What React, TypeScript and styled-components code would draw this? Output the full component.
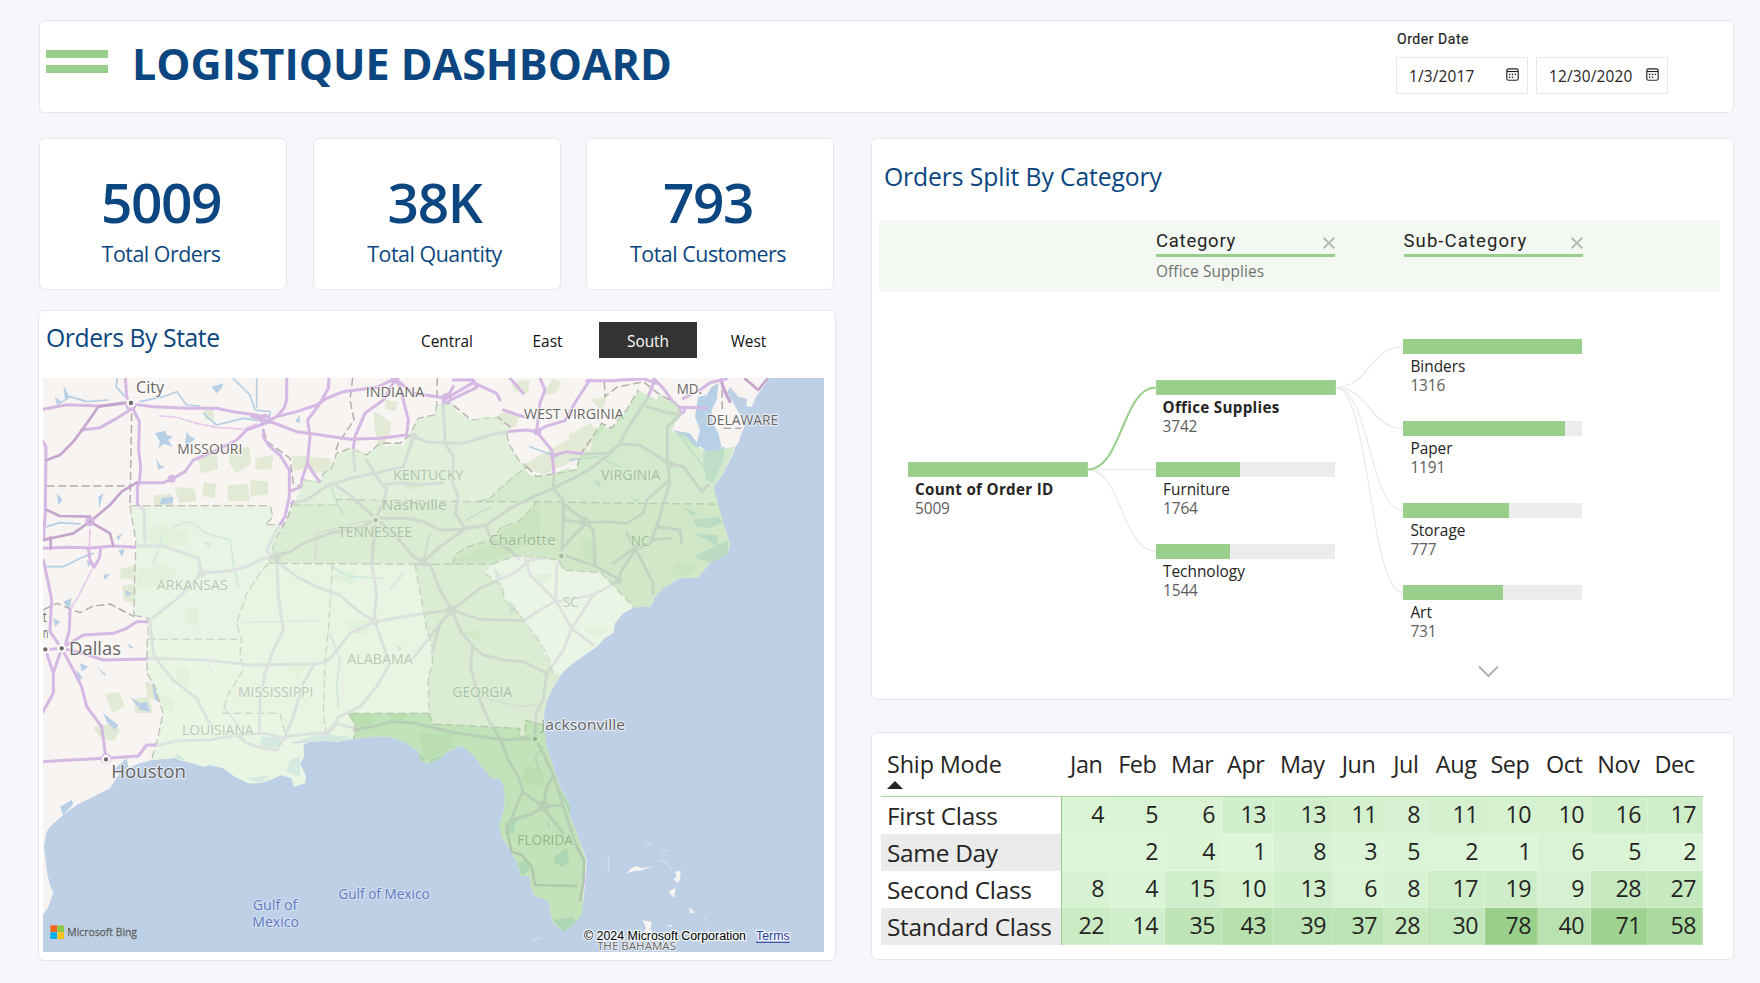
import React from "react";
import styled, { createGlobalStyle } from "styled-components";

const UI = `"Open Sans", "Noto Sans", sans-serif`;
const DIN = `Roboto, "Liberation Sans", sans-serif`;
const NAVY = "#0b4680";
const GREEN = "#98d08b";

const GlobalStyle = createGlobalStyle`
  html, body { margin: 0; padding: 0; background: #f6f7fc; }
  body { width: 1760px; height: 983px; overflow: hidden; font-family: ${UI}; color: #252423; }
  *, *::before, *::after { box-sizing: border-box; }
`;

/* ---------- page frame ---------- */

const Page = styled.div`
  width: 1760px;
  height: 983px;
  padding: 20px 26px 0 39px;
  display: flex;
  flex-direction: column;
  gap: 25px;
`;

const Card = styled.section`
  background: #fff;
  border: 1px solid #e6e7e8;
  border-radius: 6px;
`;

const HeaderCard = styled(Card)`
  height: 93px;
  display: flex;
  justify-content: space-between;
  padding: 0 65px 0 6px;
`;

const Brand = styled.div`
  display: flex;
  gap: 24px;
`;

const Bars = styled.div`
  width: 62px;
  padding-top: 29px;
  display: flex;
  flex-direction: column;
  gap: 7px;
`;

const Bar = styled.span`
  height: 8px;
  background: ${GREEN};
`;

const Title = styled.h1`
  margin: 13px 0 0;
  font-size: 43px;
  font-weight: 700;
  line-height: 60px;
  color: ${NAVY};
  white-space: nowrap;
`;

const DateFilter = styled.div`
  width: 272px;
  padding-top: 10px;
`;

const DateLabel = styled.div`
  font-family: ${DIN};
  font-size: 14px;
  font-weight: 400;
  line-height: 17px;
  letter-spacing: 0.55px;
  padding-left: 1px;
  -webkit-text-stroke: 0.2px #252423;
`;

const DateRow = styled.div`
  display: flex;
  gap: 8px;
  margin-top: 9px;
`;

const DateBox = styled.div`
  width: 132px;
  height: 37px;
  border: 1px solid #e8e8e8;
  display: flex;
  justify-content: space-between;
  padding: 0 8px 0 12px;
  font-size: 15.4px;
  letter-spacing: 0.18px;
  line-height: 38px;
  white-space: nowrap;
  svg { margin-top: 9.5px; flex: none; }
`;

const Columns = styled.main`
  display: flex;
  gap: 36px;
`;

const LeftColumn = styled.div`
  width: 796px;
  display: flex;
  flex-direction: column;
  gap: 20px;
`;

const RightColumn = styled.div`
  width: 863px;
  display: flex;
  flex-direction: column;
  gap: 32px;
`;

/* ---------- key figures ---------- */

const Stats = styled.div`
  width: 795px;
  display: grid;
  grid-template-columns: repeat(3, 248px);
  justify-content: space-between;
`;

const StatCard = styled(Card)`
  height: 152px;
  padding: 27px 4px 0 0;
  text-align: center;
  color: ${NAVY};
`;

const StatValue = styled.div`
  font-size: 55px;
  font-weight: 600;
  line-height: 71px;
  letter-spacing: -1.4px;
`;

const StatLabel = styled.div`
  margin-top: 2px;
  font-size: 21.4px;
  line-height: 30px;
  letter-spacing: -0.48px;
`;

/* ---------- map panel ---------- */

const MapCard = styled(Card)`
  height: 651px;
  margin: 0 -1px;
  padding: 11px 11px 0 4px;
`;

const MapHeader = styled.div`
  display: flex;
  justify-content: space-between;
  height: 56px;
  padding: 0 27px 0 3px;
`;

const PanelTitle = styled.h2`
  margin: 0;
  font-size: 24.7px;
  font-weight: 400;
  line-height: 32px;
  letter-spacing: -0.42px;
  color: ${NAVY};
  white-space: nowrap;
`;

const Tabs = styled.div`
  display: flex;
  gap: 2.5px;
`;

const Tab = styled.button<{ $active?: boolean }>`
  width: 98px;
  height: 36px;
  padding: 3px 0 0 1px;
  border: 0;
  font: 400 15.4px/33px ${UI};
  letter-spacing: 0;
  background: ${(p) => (p.$active ? "#333" : "transparent")};
  color: ${(p) => (p.$active ? "#fff" : "#111")};
`;

const MapSvg = styled.svg`
  display: block;
  font-family: ${UI};
`;

/* ---------- decomposition tree ---------- */

const TreeCard = styled(Card)`
  height: 562px;
  padding: 21px 13px 0 7px;
`;

const TreeTitle = styled(PanelTitle)`
  padding-left: 5px;
  height: 60px;
  line-height: 34px;
  letter-spacing: -0.1px;
`;

const LevelBand = styled.div`
  height: 72px;
  background: #f3f8f2;
  display: flex;
  gap: 68.5px;
  padding: 12px 0 0 277px;
`;

const Level = styled.div`
  width: 179px;
`;

const LevelHead = styled.div<{ $wide?: boolean }>`
  height: 25px;
  border-bottom: 3px solid ${GREEN};
  display: flex;
  justify-content: space-between;
  font-family: ${DIN};
  font-size: 18.5px;
  line-height: 19px;
  letter-spacing: ${(p) => (p.$wide ? "1.1px" : "0.75px")};
  white-space: nowrap;
  svg { margin-top: 4.5px; }
`;

const LevelValue = styled.div`
  font-size: 15.4px;
  line-height: 30px;
  letter-spacing: 0.1px;
  color: #70726f;
`;

const TreeCanvas = styled.div`
  position: relative;
  height: 400px;
`;

const Links = styled.svg`
  position: absolute;
  left: 0;
  top: 0;
`;

const NodeBox = styled.div<{ $bold?: boolean }>`
  position: absolute;
  width: ${(p) => (p.$bold ? "180px" : "179px")};
`;

const Track = styled.div<{ $full?: boolean }>`
  height: 14.5px;
  background: #ececec;
  outline: ${(p) => (p.$full ? "1px solid #a9cfa0" : "none")};
  outline-offset: -1px;
`;

const Fill = styled.div`
  height: 100%;
  background: ${GREEN};
`;

const NodeName = styled.div<{ $bold?: boolean }>`
  padding: 3.5px 0 0 7px;
  font-size: ${(p) => (p.$bold ? "15.2px" : "15.4px")};
  font-weight: ${(p) => (p.$bold ? 700 : 400)};
  line-height: 19px;
  letter-spacing: ${(p) => (p.$bold ? "0.3px" : "0")};
  white-space: nowrap;
`;

const NodeValue = styled.div`
  padding-left: 7px;
  font-size: 15.4px;
  line-height: 19px;
  letter-spacing: -0.1px;
  color: #605e5c;
`;

const More = styled.svg`
  position: absolute;
  left: 599px;
  top: 373px;
`;

/* ---------- matrix ---------- */

const TableCard = styled(Card)`
  height: 228px;
  padding: 13px 0 0 9px;
`;

const Matrix = styled.table`
  width: 822px;
  table-layout: fixed;
  border-collapse: separate;
  border-spacing: 0;
`;

const MonthHead = styled.th`
  height: 51px;
  padding: 3px 8.5px 0 0;
  font-size: 23.4px;
  font-weight: 400;
  line-height: 30px;
  letter-spacing: -0.4px;
  text-align: right;
  vertical-align: top;
  white-space: nowrap;
  border-bottom: 1.5px solid #a5d59b;
`;

const ModeHead = styled(MonthHead)`
  text-align: left;
  padding: 3px 0 0 6px;
  letter-spacing: -0.15px;
`;

const SortMark = styled.span`
  display: block;
  width: 0;
  margin-top: 2px;
  border: 8px solid transparent;
  border-top: 0;
  border-bottom: 8px solid #252423;
`;

const ModeCell = styled.th<{ $shade: boolean }>`
  height: 37px;
  padding: 1px 0 0 6px;
  font-size: 24.4px;
  font-weight: 400;
  line-height: 36px;
  letter-spacing: -0.28px;
  text-align: left;
  white-space: nowrap;
  background: ${(p) => (p.$shade ? "#ebebeb" : "#fff")};
  border-right: 1.5px solid #98c98d;
`;

const HeatCell = styled.td<{ $tone: string }>`
  height: 37px;
  padding: 0 7px 3px 0;
  font-size: 23.2px;
  line-height: 34px;
  letter-spacing: -0.5px;
  text-align: right;
  background: ${(p) => p.$tone};
  box-shadow: inset -1px -1px 0 rgba(255, 255, 255, 0.22);
`;

/* ---------- data ---------- */

const months = ["Jan", "Feb", "Mar", "Apr", "May", "Jun", "Jul", "Aug", "Sep", "Oct", "Nov", "Dec"];
const monthWidths = [49, 54, 57, 51, 60, 51, 43, 58, 53, 53, 57, 55];
const shipModes: { name: string; values: (number | null)[] }[] = [
  { name: "First Class", values: [4, 5, 6, 13, 13, 11, 8, 11, 10, 10, 16, 17] },
  { name: "Same Day", values: [null, 2, 4, 1, 8, 3, 5, 2, 1, 6, 5, 2] },
  { name: "Second Class", values: [8, 4, 15, 10, 13, 6, 8, 17, 19, 9, 28, 27] },
  { name: "Standard Class", values: [22, 14, 35, 43, 39, 37, 28, 30, 78, 40, 71, 58] },
];

const heat = (v: number | null) => {
  const t = ((v ?? 1) - 1) / 77;
  const mix = (a: number, b: number) => Math.round(a + (b - a) * t);
  return `rgb(${mix(221, 152)}, ${mix(245, 208)}, ${mix(217, 139)})`;
};

type TreeNode = { x: number; y: number; name: string; value: string; share: number; bold?: boolean };
const nodes: TreeNode[] = [
  { x: 29, y: 170, name: "Count of Order ID", value: "5009", share: 1, bold: true },
  { x: 276.5, y: 88, name: "Office Supplies", value: "3742", share: 1, bold: true },
  { x: 277, y: 170, name: "Furniture", value: "1764", share: 0.471 },
  { x: 277, y: 252, name: "Technology", value: "1544", share: 0.413 },
  { x: 524.4, y: 47, name: "Binders", value: "1316", share: 1 },
  { x: 524.4, y: 129, name: "Paper", value: "1191", share: 0.905 },
  { x: 524.4, y: 211, name: "Storage", value: "777", share: 0.59 },
  { x: 524.4, y: 293, name: "Art", value: "731", share: 0.555 },
];

const curve = (x1: number, y1: number, x2: number, y2: number) => {
  const m = (x1 + x2) / 2;
  return `M${x1} ${y1}C${m} ${y1} ${m} ${y2} ${x2} ${y2}`;
};

/* Map geometry: three drawing units to one screen pixel. */

const land =
  "M39 234H2218L2200 262 2178 290 2165 322 2148 318 2152 296 2125 290 2100 262 2092 275 2105 300 2130 345 2145 375 2135 400 2125 430 2115 440 2110 460 2080 520 2050 560 2065 620 2080 670 2100 730 2093 763 2040 790 2003 833 1950 835 1900 865 1875 890 1863 920 1812 922 1780 940 1755 970 1750 998 1720 1018 1700 1040 1635 1085 1605 1110 1592 1125 1565 1170 1550 1205 1542 1240 1543 1290 1550 1340 1570 1400 1590 1460 1620 1515 1620 1550 1645 1610 1670 1680 1665 1750 1658 1820 1655 1845 1630 1875 1600 1895 1570 1870 1562 1840 1558 1810 1540 1795 1515 1788 1502 1760 1498 1728 1472 1728 1462 1690 1440 1650 1415 1610 1407 1575 1422 1530 1425 1490 1420 1455 1410 1438 1385 1435 1355 1400 1330 1365 1295 1337 1260 1350 1230 1375 1200 1393 1170 1382 1165 1355 1130 1330 1080 1310 1030 1310 970 1318 920 1325 850 1323 820 1335 822 1370 810 1390 828 1430 825 1450 792 1460 785 1435 755 1425 720 1440 690 1450 655 1450 615 1430 580 1405 540 1395 520 1400 470 1385 430 1375 365 1380 330 1390 290 1405 262 1430 240 1465 190 1490 140 1515 100 1545 60 1580 48 1600 42 1640 50 1710 58 1750 70 1780 55 1820 39 1845Z";

const states: { id: string; fill: string; d: string }[] = [
  { id: "KY", fill: "#d4edcf", d: "M790 615L795 600 812 570 820 540 850 540 870 548 880 520 905 505 920 460 940 455 960 445 985 450 1010 465 1050 430 1070 440 1110 430 1115 440 1140 405 1165 355 1190 350 1215 345 1220 315 1245 310 1265 312 1280 335 1325 360 1360 350 1405 352 1415 375 1445 385 1430 400 1435 430 1465 480 1490 500 1480 505 1415 560 1380 595 1340 605 920 598 920 615Z" },
  { id: "TN", fill: "#cbe8c3", d: "M790 615L775 650 760 680 735 720 725 760 715 790 1155 793 1268 793 1275 765 1310 742 1385 720 1415 680 1465 665 1500 630 1520 605 1340 605 920 598 920 615Z" },
  { id: "VA", fill: "#c3e4ba", d: "M1340 605L1380 595 1415 560 1480 505 1500 525 1520 530 1570 522 1610 505 1640 510 1650 465 1680 450 1695 400 1715 370 1730 385 1745 385 1790 330 1825 270 1880 300 1890 280 1910 300 1940 310 1955 345 1935 370 1925 395 1960 400 2000 440 2030 455 2115 440 2080 520 2050 560 2065 612 1820 610 1520 605Z" },
  { id: "NC", fill: "#bce1b2", d: "M1520 605L1820 610 2065 612 2080 670 2100 730 2093 763 2040 790 2003 833 1950 835 1900 865 1875 890 1863 920 1812 922 1712 818 1600 810 1585 780 1545 775 1458 768 1385 793 1268 793 1275 765 1310 742 1385 720 1415 680 1465 665 1500 630Z" },
  { id: "SC", fill: "#e3f5df", d: "M1385 793L1458 768 1545 775 1585 780 1600 810 1712 818 1812 922 1780 940 1755 970 1750 998 1720 1018 1700 1040 1635 1085 1605 1110 1592 1122 1568 1118 1560 1085 1540 1060 1530 1025 1500 990 1470 945 1425 900 1415 855 1365 820Z" },
  { id: "GA", fill: "#cce9c4", d: "M1155 793H1385L1365 820 1415 855 1425 900 1470 945 1500 990 1530 1025 1540 1060 1560 1085 1568 1118 1592 1125 1565 1170 1550 1205 1542 1240 1541 1275 1485 1260 1485 1308 1470 1312 1470 1285 1210 1272 1197 1240 1195 1130 1205 1100 1210 1050 1190 990 1180 930 1165 850Z" },
  { id: "AL", fill: "#dff5da", d: "M908 793H1155L1165 850 1180 930 1190 990 1210 1050 1205 1100 1195 1130 1197 1240H955L975 1275 970 1318 920 1325 887 1324V1295L880 1240 885 1090 895 990Z" },
  { id: "MS", fill: "#e0f5dc", d: "M715 790L908 793 895 990 885 1090 880 1240 887 1295V1324L820 1328 775 1325 765 1300 750 1240H580L590 1190 640 1110 630 1060 635 1018 620 970 650 880 690 820Z" },
  { id: "LA", fill: "#e2f6dd", d: "M352 1018H635L630 1060 640 1110 590 1190 580 1240H750L765 1300 775 1325 820 1335 822 1370 810 1390 828 1430 825 1450 792 1460 785 1435 755 1425 720 1440 690 1450 655 1450 615 1430 580 1405 540 1395 520 1400 470 1385 430 1375 365 1380 385 1310 400 1240 375 1160 352 1120Z" },
  { id: "AR", fill: "#e0f5dd", d: "M300 618H720L728 650 705 675H760L735 720 725 760 715 790 690 820 650 880 620 970 635 1018H352L355 955 312 945 318 720Z" },
  { id: "FL", fill: "#a8d89e", d: "M955 1240H1197L1210 1272 1470 1285V1312L1485 1308V1260L1541 1275 1543 1290 1550 1340 1570 1400 1590 1460 1620 1515 1620 1550 1645 1610 1668 1680 1662 1750 1658 1820 1655 1845 1630 1875 1600 1895 1570 1870 1562 1840 1558 1810 1540 1795 1515 1788 1502 1760 1498 1728 1472 1728 1462 1690 1440 1650 1415 1610 1407 1575 1422 1530 1425 1490 1420 1455 1410 1438 1385 1435 1355 1400 1330 1365 1295 1337 1260 1350 1230 1375 1200 1393 1170 1382 1165 1355 1130 1330 1080 1310 1030 1310 970 1318 975 1275Z" },
];

const highways = [
  "M39 328L110 314 210 318 290 310 370 320 470 325 560 325 610 335 680 345 705 352",
  "M155 390L210 383 260 355 300 330",
  "M286 234L290 290 303 315 328 365 326 450 332 500 328 550 322 560V615L342 630 345 735",
  "M39 425L48 440 46 640 40 720",
  "M39 720L62 715M39 745L120 742 180 744 250 738 320 742",
  "M320 548L400 548 430 535 465 515 490 480 520 468 560 450 620 420 650 390 700 372",
  "M175 745L180 780 192 802 208 775 212 745",
  "M320 738L400 738 450 755 505 775 515 820 600 812 650 800 700 775 740 770",
  "M515 820L450 890 360 960 370 1060 380 1080",
  "M770 234V300L762 325 740 350 705 368",
  "M897 234L895 265 870 310 833 360 840 410 832 490 815 540 815 560 785 572",
  "M740 350L800 335 860 315 890 295 940 275 1040 262 1095 236",
  "M665 350L705 360 740 372 800 395 850 402 960 418 1050 415 1130 405 1135 360 1110 260 1095 236",
  "M700 390V410L715 435 750 465 778 510V590L765 650 740 690 710 750 725 770",
  "M832 490L850 520 870 546",
  "M970 445L975 410 1005 340 1060 300 1095 240",
  "M1100 240L1150 280 1250 295 1270 260",
  "M725 770L780 755 830 725 900 700 1000 680 1037 655 1130 655 1180 665 1230 690 1300 688 1370 675 1440 625 1500 595 1570 565 1640 530 1690 500 1740 460 1770 430 1795 380 1850 300 1875 240",
  "M785 610L830 600 890 558 960 535 1035 520 1120 500 1150 410 1190 425 1245 430 1300 430 1380 405 1430 395 1490 390 1520 395 1545 380 1605 362 1640 300 1680 240",
  "M970 455L975 510M1010 480L1040 530 1070 570 1060 610 1037 655",
  "M915 555L960 585 1037 655 1100 710 1150 770 1180 785 1230 740 1300 690",
  "M1037 655L1025 790 1040 880 1030 970",
  "M1060 555L1110 548 1160 555 1200 552 1240 548",
  "M740 770L745 890 760 990 730 1050 705 1120 690 1200 688 1300",
  "M740 785L800 830 860 860 930 885 980 930 1035 965M1035 965L1150 945 1265 930",
  "M1270 240L1330 240 1340 262 1262 300M1240 300L1330 248 1400 280 1410 300",
  "M1240 310L1245 430 1270 470 1268 550 1285 590 1275 640 1305 685 1365 675 1385 720 1440 750 1465 775",
  "M1420 330L1480 350M1440 234L1480 280",
  "M1520 395L1565 450 1572 520 1570 565 1600 600V660L1595 765 1580 800 1578 900",
  "M1530 234L1545 270 1530 310 1520 395",
  "M1565 468L1610 455 1660 462 1735 460 1770 432",
  "M1670 242H1740L1840 236 1880 250",
  "M1770 432L1830 435 1915 490 1960 500 1990 540 2015 575 2035 555",
  "M1850 320L1900 335 1950 345M1870 234L1900 265 1925 300 1950 325 1945 350 1912 380V490L1920 545 1880 680 1860 730 1818 745 1770 820V845",
  "M1918 540L1850 600 1840 640 1790 670 1730 665 1660 668 1600 660",
  "M1600 610L1670 668 1600 740M1670 668L1650 650M1665 665L1690 690 1695 790",
  "M1485 775L1500 825 1580 905 1690 885 1770 840 1700 800 1600 765",
  "M1265 930L1350 865 1450 820 1500 780 1545 775",
  "M1265 930L1350 958 1480 962 1530 930 1578 903 1625 985 1645 955 1690 885",
  "M1155 793L1200 793 1230 870 1265 930 1200 1010 1150 1075",
  "M1265 930L1295 1000 1328 1035 1322 1100 1345 1190 1375 1260 1410 1315 1435 1380 1465 1430 1478 1475 1450 1540 1430 1590",
  "M1328 1040L1360 1065 1420 1080 1480 1085 1550 1120M1265 930L1230 970 1205 1060",
  "M1950 322L2030 324M1960 295L2010 270 2040 248 2090 236M2075 236L2080 270 2100 305",
  "M1790 700L1810 735 1870 850 1868 880M1818 740L1750 790",
  "M1880 680L1950 690 1955 730M1865 720L1920 715",
  "M1625 985L1690 1035M1625 985L1600 1050 1580 1080 1550 1120 1540 1200 1518 1240 1515 1315 1540 1360 1572 1430 1600 1520 1640 1640",
  "M1200 1280L1260 1295 1420 1320 1515 1315M970 1290L1020 1282 1080 1265 1150 1268 1240 1292",
  "M385 1335L440 1322 540 1320 620 1305 650 1330 700 1345 740 1350 765 1310 850 1300 890 1300 915 1270 975 1285",
  "M620 1305L700 1300 765 1315",
  "M1035 965L1050 1010 1080 1090 1040 1160 990 1220 920 1255 915 1280 890 1300",
  "M1035 965L960 1000 900 1075 885 1085 850 1095 820 1150 790 1250 762 1315",
  "M355 1075L530 1080 660 1095 850 1092",
  "M380 1080L430 1140 500 1195 520 1235 545 1280",
  "M95 1045L70 1120V1180L39 1235M46 1048L70 1120M39 1050L95 1045 60 995",
  "M95 1045L130 1110 155 1160 170 1220 215 1280 228 1375",
  "M95 1045L160 1060 220 1080 352 1077M95 1045L160 1005 250 1000 290 985 320 965H352",
  "M60 990L65 900 55 850 40 780M105 1040L118 990 120 930",
  "M39 1385L120 1380 228 1375 325 1368 350 1335H385",
  "M1440 1560L1500 1545 1540 1520 1550 1460 1570 1430M1478 1475L1540 1520 1595 1515",
  "M1545 1530L1600 1600",
];

const tollways = [
  "M50 480L90 465 130 425 160 385 205 320 285 308",
  "M39 720L130 700 180 665 240 615 275 575 320 548",
  "M50 630L90 648 180 650M180 665L240 700 250 738",
  "M62 712V745",
  "M2145 236L2185 270 2212 236M2075 250L2100 305",
  "M1430 1590L1445 1655 1475 1665 1505 1700 1515 1755 1640 1758M1640 1640L1662 1680 1660 1750 1650 1800",
];

const thinRoads = [
  "M390 348L440 352 500 370 560 382 640 388 680 372",
  "M120 930L150 880 185 810M180 690L178 740",
  "M640 968L750 965 860 962M1040 655L860 700 855 780",
  "M1345 1190L1460 1218 1530 1215M530 1080L545 1110",
];

const borders = [
  "M305 340L300 618H720L728 650 705 675H760",
  "M50 558H300M312 945L355 955V1018H635M300 618L318 720 312 945",
  "M39 930L80 910 150 938 190 918 240 912 312 950",
  "M790 615H920V598L1340 605 1520 605 1820 610 2065 612",
  "M715 790L1155 793 1385 793M908 793L895 990 885 1090 880 1240 887 1295",
  "M1155 793L1165 850 1180 930 1190 990 1210 1050 1205 1100 1195 1130 1197 1240H955L975 1275 970 1318",
  "M1197 1240L1210 1272 1470 1285V1312L1485 1308V1260L1541 1275",
  "M715 790L690 820 650 880 620 970 635 1018 630 1060 640 1110 590 1190 580 1240H750L765 1300",
  "M352 1120L375 1160 400 1240 385 1310 365 1380M352 1018V1120",
  "M968 234L960 300 972 360 925 430 915 460M1222 234L1220 310",
  "M820 540L870 548 880 520 905 505 920 460 960 445 1010 465 1050 430 1110 430 1140 405 1165 355 1215 345 1220 315 1265 312 1325 360 1405 352 1445 385",
  "M1430 400L1435 430 1465 480 1490 500 1415 560 1380 595 1340 605M1490 500L1520 530 1570 522 1640 510 1650 465 1695 400 1715 370 1745 385 1790 330 1825 270",
  "M1723 245L1725 290 1760 262 1840 245 1890 285 1940 310M2075 234L2077 330M2080 385H2135",
  "M1268 793L1275 765 1310 742 1385 720 1415 680 1465 665 1500 630 1520 605",
  "M1385 793L1458 768 1585 780 1600 810 1712 818 1812 922M1365 820L1415 855 1425 900 1470 945 1530 1025 1560 1085 1568 1118",
  "M700 390L712 425 780 475 790 550 812 560M790 600L775 650 735 720 715 790",
];

const rivers = [
  "M262 234L258 260 285 290M330 305L400 290 440 275 470 315 510 318",
  "M610 236L660 285 675 330 720 335 718 370M680 234V320",
  "M520 340L560 375 640 355 690 362M75 320L120 290 170 305 235 300",
  "M400 700L370 790M430 680L480 665 530 700 600 720 610 790 625 860",
  "M48 800L100 800 150 775 190 760M50 680L90 668 150 672",
  "M900 550L925 620 940 640M905 800L960 830 1060 835M1120 820L1080 870",
  "M1540 1340L1515 1370 1530 1420M900 1000L930 1080 920 1150 925 1220",
  "M580 1220L620 1270 640 1320M1200 700L1180 780M1620 480L1700 470 1770 500",
  "M1945 400L1990 460 2020 500M1500 440L1580 470M1380 620L1310 660",
];

const forests = [
  "M510 470L555 460 560 505 515 515ZM605 450L655 445 660 490 620 515 600 485ZM680 480L725 470 722 505 680 505Z",
  "M440 565L490 570 495 600 450 605ZM525 550L555 555 550 590 520 585ZM595 560L650 555 655 600 600 600ZM665 545L710 548V580L665 585Z",
  "M790 470L850 475 900 480 895 510 860 515 830 500 795 510ZM1035 340L1080 370 1075 400 1050 445 1040 400ZM1070 305L1100 310 1095 328 1070 325Z",
  "M525 335L545 330 548 355 528 355ZM375 590L420 585 425 612 378 612ZM275 810L312 800V835L275 832ZM280 860L312 855V905L285 900Z",
  "M1410 345L1445 335 1465 350 1455 378 1415 370ZM1450 250L1495 245 1490 275 1455 270ZM1545 280L1570 240 1590 250 1575 275ZM1620 405L1680 375 1700 395 1670 430 1625 440ZM1690 300L1725 295 1715 330Z",
  "M230 1185L265 1180 280 1215 250 1235ZM315 1200L355 1195 365 1235 320 1235ZM195 1285L240 1275 265 1290 250 1320 215 1310ZM350 1150L375 1160 395 1200 355 1190Z",
  "M340 690L400 680 470 700 465 735 400 730 340 715ZM325 810L400 795 440 820 400 850 325 865ZM470 930L500 925V975L470 965Z",
  "M440 1110L475 1105V1150L445 1150ZM770 1090L830 1095 800 1125ZM400 1190L430 1200 425 1230 405 1225ZM950 970L1020 965 1000 1005ZM900 830L970 815 965 850Z",
  "M1110 520L1160 510 1180 560 1130 565ZM1280 780L1380 740 1420 700 1480 660 1520 620 1530 700 1450 750 1380 780ZM1480 500L1600 430 1720 380 1650 470 1540 520Z",
  "M960 1245H1030L1020 1275 970 1270ZM1080 1245H1130L1110 1262ZM1170 1300L1250 1310 1270 1345 1190 1375ZM1490 1400L1540 1420 1530 1460 1480 1440ZM1300 1000L1340 990 1350 1020Z",
  "M1240 1290L1280 1300 1260 1335ZM1660 720L1700 730 1695 780 1665 770ZM1940 795L2000 790 1980 820 1930 820ZM1500 830L1560 825 1540 850ZM1670 990L1730 990 1700 1010Z",
];

const lakes = [
  "M375 400L405 392 410 405 430 410 415 420 428 440 402 432 385 445 390 425ZM470 395L482 410 495 415 480 430 465 432Z",
  "M378 475L390 495 405 500 385 510ZM395 595L430 590 428 610 390 612ZM795 365L808 345 810 368Z",
  "M545 260L580 250 575 265 560 280ZM100 255L118 290 105 300ZM75 290L95 305 80 312Z",
  "M300 1190L330 1210 350 1205 360 1235 330 1230ZM220 1240L245 1260 265 1275 255 1290 230 1265ZM365 1150L395 1210 375 1200Z",
  "M150 1090L175 1100 155 1115ZM200 1100L225 1120 228 1130ZM140 1110L158 1135 140 1145ZM295 1030L312 1045 298 1045Z",
  "M80 580L98 600 85 615ZM205 590L220 580 208 625ZM260 710L278 700 265 722ZM70 955L92 965 75 980ZM100 905L125 895 118 930Z",
  "M220 825L240 822 225 840ZM285 870L305 880 290 890ZM265 750L285 748 275 770ZM170 780L185 790 175 800Z",
  "M2020 455L2085 440 2080 480 2050 550 2030 540 2020 500ZM2005 290L2030 285 2045 260 2065 250 2060 300 2045 330 2048 370 2065 400 2075 440 2030 455 2000 430 2010 390 1995 350Z",
  "M1925 390L1980 400 2010 440 2000 445 1960 410ZM1990 660L2060 650 2078 665 2040 685 2000 680ZM1990 770L2060 735 2095 720 2093 763 2040 790Z",
  "M1960 620L2000 640 1990 650ZM1985 700L2060 705 2065 740 2020 715ZM695 1310L745 1310 760 1335 720 1345 690 1335ZM780 1330L880 1300 950 1310 970 1318 880 1328Z",
  "M1572 1670L1610 1645 1618 1680 1600 1700 1575 1690ZM1590 1470L1620 1515V1540L1600 1500ZM1570 1860L1625 1850 1640 1865 1600 1895ZM1425 1570L1460 1555 1450 1600 1425 1600ZM1462 1690L1490 1680 1500 1710 1475 1728Z",
  "M1200 1378L1240 1365 1200 1393ZM780 1380L810 1370 810 1430 770 1415ZM650 1435L720 1425 690 1450ZM440 1360L470 1380 430 1376ZM1545 1560L1560 1575 1560 1590Z",
  "M1170 1382L1165 1358 1190 1380ZM90 1520L125 1500 130 1512 100 1545ZM255 1405L290 1375 295 1400 265 1425Z",
  "M1690 540L1715 545 1705 560ZM1800 590L1830 600 1815 605ZM1390 795L1415 830 1400 850ZM520 725L545 730 535 742ZM1440 900L1460 925 1440 945ZM1100 1035L1120 1045 1105 1055Z",
];

const islands = [
  "M1790 1720L1805 1704 1820 1698 1835 1705 1870 1699 1835 1711 1810 1714Z",
  "M1935 1715L1952 1712 1950 1740 1942 1748 1930 1738 1940 1730Z",
  "M1915 1775L1937 1763 1933 1795Z",
  "M1977 1820L1995 1838 1980 1840Z",
  "M1838 1860L1865 1865 1862 1885 1870 1905 1885 1925 1830 1915 1848 1885Z",
  "M1910 1875H1930L1920 1880Z",
];
const reefs = "M1885 1682L1905 1685 1925 1710M1735 1672V1710M1845 1625L1870 1638M1895 1648L1912 1655M2020 1850L2035 1865M2034 1885V1900M1510 1922L1530 1912";

type Label = { t: string; x: number; y: number; w: number; s: number };
const stateLabels: Label[] = [
  { t: "INDIANA", x: 1007, y: 291, w: 176, s: 41 },
  { t: "MISSOURI", x: 442, y: 462, w: 195, s: 41 },
  { t: "KENTUCKY", x: 1090, y: 540, w: 210, s: 41 },
  { t: "TENNESSEE", x: 925, y: 711, w: 221, s: 41 },
  { t: "ARKANSAS", x: 380, y: 870, w: 214, s: 41 },
  { t: "WEST VIRGINIA", x: 1482, y: 358, w: 299, s: 41 },
  { t: "MD.", x: 1940, y: 282, w: 76, s: 41 },
  { t: "DELAWARE", x: 2030, y: 374, w: 215, s: 41 },
  { t: "VIRGINIA", x: 1713, y: 540, w: 178, s: 41 },
  { t: "NC", x: 1802, y: 738, w: 57, s: 41 },
  { t: "SC", x: 1598, y: 920, w: 48, s: 41 },
  { t: "ALABAMA", x: 952, y: 1091, w: 196, s: 41 },
  { t: "MISSISSIPPI", x: 624, y: 1190, w: 226, s: 41 },
  { t: "LOUISIANA", x: 456, y: 1306, w: 215, s: 41 },
  { t: "GEORGIA", x: 1267, y: 1190, w: 179, s: 41 },
  { t: "FLORIDA", x: 1462, y: 1635, w: 167, s: 41 },
  { t: "THE BAHAMAS", x: 1701, y: 1951, w: 237, s: 35 },
];
const cityLabels: Label[] = [
  { t: "City", x: 318, y: 280, w: 84, s: 47 },
  { t: "Nashville", x: 1055, y: 629, w: 195, s: 46 },
  { t: "Charlotte", x: 1376, y: 736, w: 201, s: 46 },
  { t: "Jacksonville", x: 1533, y: 1291, w: 252, s: 46 },
  { t: "Dallas", x: 117, y: 1065, w: 156, s: 57 },
  { t: "Houston", x: 244, y: 1435, w: 224, s: 57 },
  { t: "t", x: 39, y: 965, w: 11, s: 46 },
  { t: "n", x: 39, y: 1015, w: 16, s: 46 },
];
const seaLabels: Label[] = [
  { t: "Gulf of Mexico", x: 925, y: 1798, w: 274, s: 43 },
  { t: "Gulf of", x: 668, y: 1831, w: 134, s: 43 },
  { t: "Mexico", x: 667, y: 1881, w: 140, s: 43 },
];
const cities = [[303, 309], [1037, 660], [1594, 768], [1515, 1317], [95, 1045], [228, 1378], [46, 1048]];
const hubs = [[303, 318, 18], [705, 358, 20], [180, 665, 16], [1250, 295, 20], [1095, 238, 14], [425, 536, 12], [1265, 930, 18], [1035, 965, 14], [740, 770, 15], [515, 820, 14], [1180, 785, 12], [1665, 665, 18], [1540, 1518, 20], [228, 1376, 20], [1955, 330, 14], [1150, 410, 12], [1920, 495, 12], [1522, 395, 11]];

const MapText = ({ items, fill, halo }: { items: Label[]; fill: string; halo: string }) => (
  <g fill={fill} stroke={halo} strokeWidth={7} strokeLinejoin="round" paintOrder="stroke">
    {items.map((l) => (
      <text key={l.t} x={l.x} y={l.y} fontSize={l.s} textLength={l.w} lengthAdjust="spacingAndGlyphs">
        {l.t}
      </text>
    ))}
  </g>
);

const StateMap = () => (
  <MapSvg width="781" height="574" viewBox="39 234 2343 1722">
    <rect x="39" y="234" width="2343" height="1722" fill="#bdd0e5" />
    <path d={land} fill="#f7f4f2" />
    {islands.map((d) => <path key={d} d={d} fill="#f7f4f2" />)}
    <path d={reefs} fill="none" stroke="#dfe5ee" strokeWidth="3" />
    {forests.map((d) => <path key={d} d={d} fill="#e2ead5" stroke="#e2ead5" strokeWidth="8" strokeLinejoin="round" />)}
    {lakes.map((d) => <path key={d} d={d} fill="#b7d0e6" />)}
    <g fill="none" strokeLinejoin="round" strokeLinecap="round">
      {rivers.map((d) => <path key={d} d={d} stroke="#b5cfe4" strokeWidth="5" />)}
      {borders.map((d) => <path key={d} d={d} stroke="#b3adab" strokeWidth="4.5" strokeDasharray="24 11" strokeLinecap="butt" />)}
      {thinRoads.map((d) => <path key={d} d={d} stroke="#e6c6ee" strokeWidth="5" strokeDasharray="20 6" />)}
      {highways.map((d) => <path key={d} d={d} stroke="#d5b8e3" strokeWidth="9" />)}
      {tollways.map((d) => <path key={d} d={d} stroke="#c6a5cd" strokeWidth="8" />)}
      {hubs.map(([x, y, r]) => <circle key={`${x}-${y}`} cx={x} cy={y} r={r * 0.6} stroke="#d5b8e3" strokeWidth="9" />)}
    </g>
    {cities.map(([x, y]) => <circle key={`${x}-${y}`} cx={x} cy={y} r="10" fill="#6b6869" stroke="#fbf9f8" strokeWidth="7" />)}
    <MapText items={stateLabels} fill="#6a6765" halo="rgba(255,255,255,.6)" />
    <MapText items={cityLabels} fill="#686564" halo="rgba(255,255,255,.6)" />
    {states.map((s) => <path key={s.id} d={s.d} fill={s.fill} fillOpacity="0.68" />)}
    <MapText items={seaLabels} fill="#5f79c2" halo="#d3dff0" />
    <g>
      <rect x="61" y="1876" width="20" height="20" fill="#f26522" />
      <rect x="82" y="1876" width="20" height="20" fill="#8dc63f" />
      <rect x="61" y="1897" width="20" height="20" fill="#00aeef" />
      <rect x="82" y="1897" width="20" height="20" fill="#ffc20e" />
      <text x="112" y="1909" fontSize="35" textLength="209" lengthAdjust="spacingAndGlyphs" fill="#606060" stroke="#606060" strokeWidth="0.8">
        Microsoft Bing
      </text>
    </g>
    <g fontFamily="'Liberation Sans', Arial, sans-serif" fontSize="36" stroke="#fff" strokeWidth="8" strokeOpacity=".75" strokeLinejoin="round" paintOrder="stroke">
      <text x="1662" y="1920" textLength="486" lengthAdjust="spacingAndGlyphs" fill="#000">© 2024 Microsoft Corporation</text>
      <text x="2178" y="1920" textLength="101" lengthAdjust="spacingAndGlyphs" fill="#2a3f9d">Terms</text>
      <path d="M2178 1927H2279" stroke="#2a3f9d" strokeWidth="3" strokeOpacity="1" />
    </g>
  </MapSvg>
);

const CalendarIcon = () => (
  <svg width="13" height="13" viewBox="0 0 13 13" fill="none" stroke="#252423" strokeWidth="1.15">
    <rect x="0.8" y="0.8" width="11.4" height="11.4" rx="1.8" />
    <path d="M1 3.5H12" />
    <g fill="#252423" stroke="none">
      <rect x="2.9" y="5.7" width="1.4" height="1.4" />
      <rect x="5.8" y="5.7" width="1.4" height="1.4" />
      <rect x="8.7" y="5.7" width="1.4" height="1.4" />
      <rect x="2.9" y="8.5" width="1.4" height="1.4" />
      <rect x="5.8" y="8.5" width="1.4" height="1.4" />
    </g>
  </svg>
);

const CloseIcon = () => (
  <svg width="12" height="12" viewBox="0 0 12 12" stroke="#b1b5ae" strokeWidth="1.7">
    <path d="M0.5 0.7L11.3 11.3M11.3 0.7L0.5 11.3" />
  </svg>
);

const stats = [
  ["5009", "Total Orders"],
  ["38K", "Total Quantity"],
  ["793", "Total Customers"],
];

export default function App() {
  return (
    <>
      <GlobalStyle />
      <Page>
        <HeaderCard as="header">
          <Brand>
            <Bars>
              <Bar />
              <Bar />
            </Bars>
            <Title>LOGISTIQUE DASHBOARD</Title>
          </Brand>
          <DateFilter>
            <DateLabel>Order Date</DateLabel>
            <DateRow>
              <DateBox>1/3/2017<CalendarIcon /></DateBox>
              <DateBox>12/30/2020<CalendarIcon /></DateBox>
            </DateRow>
          </DateFilter>
        </HeaderCard>
        <Columns>
          <LeftColumn>
            <Stats>
              {stats.map(([value, label]) => (
                <StatCard key={label}>
                  <StatValue>{value}</StatValue>
                  <StatLabel>{label}</StatLabel>
                </StatCard>
              ))}
            </Stats>
            <MapCard>
              <MapHeader>
                <PanelTitle>Orders By State</PanelTitle>
                <Tabs>
                  {["Central", "East", "South", "West"].map((t) => (
                    <Tab key={t} $active={t === "South"}>{t}</Tab>
                  ))}
                </Tabs>
              </MapHeader>
              <StateMap />
            </MapCard>
          </LeftColumn>
          <RightColumn>
            <TreeCard>
              <TreeTitle>Orders Split By Category</TreeTitle>
              <LevelBand>
                <Level>
                  <LevelHead>Category<CloseIcon /></LevelHead>
                  <LevelValue>Office Supplies</LevelValue>
                </Level>
                <Level>
                  <LevelHead $wide>Sub-Category<CloseIcon /></LevelHead>
                </Level>
              </LevelBand>
              <TreeCanvas>
                <Links width="841" height="400" fill="none" stroke="#ebebeb" strokeWidth="1.3">
                  <path d={curve(209, 177.5, 277, 177.5)} />
                  <path d={curve(209, 177.5, 277, 259.5)} />
                  {[54.5, 136.5, 218.5, 300.5].map((y) => (
                    <path key={y} d={curve(457, 95.5, 524, y)} />
                  ))}
                  <path d={curve(209, 177.5, 277, 95.5)} stroke={GREEN} strokeWidth="2" />
                </Links>
                {nodes.map((n) => (
                  <NodeBox key={n.name} $bold={n.bold} style={{ left: n.x, top: n.y }}>
                    <Track $full={n.bold}>
                      <Fill style={{ width: `${n.share * 100}%` }} />
                    </Track>
                    <NodeName $bold={n.bold}>{n.name}</NodeName>
                    <NodeValue>{n.value}</NodeValue>
                  </NodeBox>
                ))}
                <More width="21" height="13" fill="none" stroke="#b3b0ad" strokeWidth="2">
                  <path d="M1 1.5L10.5 11L20 1.5" />
                </More>
              </TreeCanvas>
            </TreeCard>
            <TableCard>
              <Matrix>
                <colgroup>
                  <col style={{ width: 181 }} />
                  {monthWidths.map((w, i) => <col key={months[i]} style={{ width: w }} />)}
                </colgroup>
                <thead>
                  <tr>
                    <ModeHead>Ship Mode<SortMark /></ModeHead>
                    {months.map((m) => <MonthHead key={m}>{m}</MonthHead>)}
                  </tr>
                </thead>
                <tbody>
                  {shipModes.map((row, r) => (
                    <tr key={row.name}>
                      <ModeCell $shade={r % 2 === 1}>{row.name}</ModeCell>
                      {row.values.map((v, i) => (
                        <HeatCell key={months[i]} $tone={heat(v)}>{v}</HeatCell>
                      ))}
                    </tr>
                  ))}
                </tbody>
              </Matrix>
            </TableCard>
          </RightColumn>
        </Columns>
      </Page>
    </>
  );
}
